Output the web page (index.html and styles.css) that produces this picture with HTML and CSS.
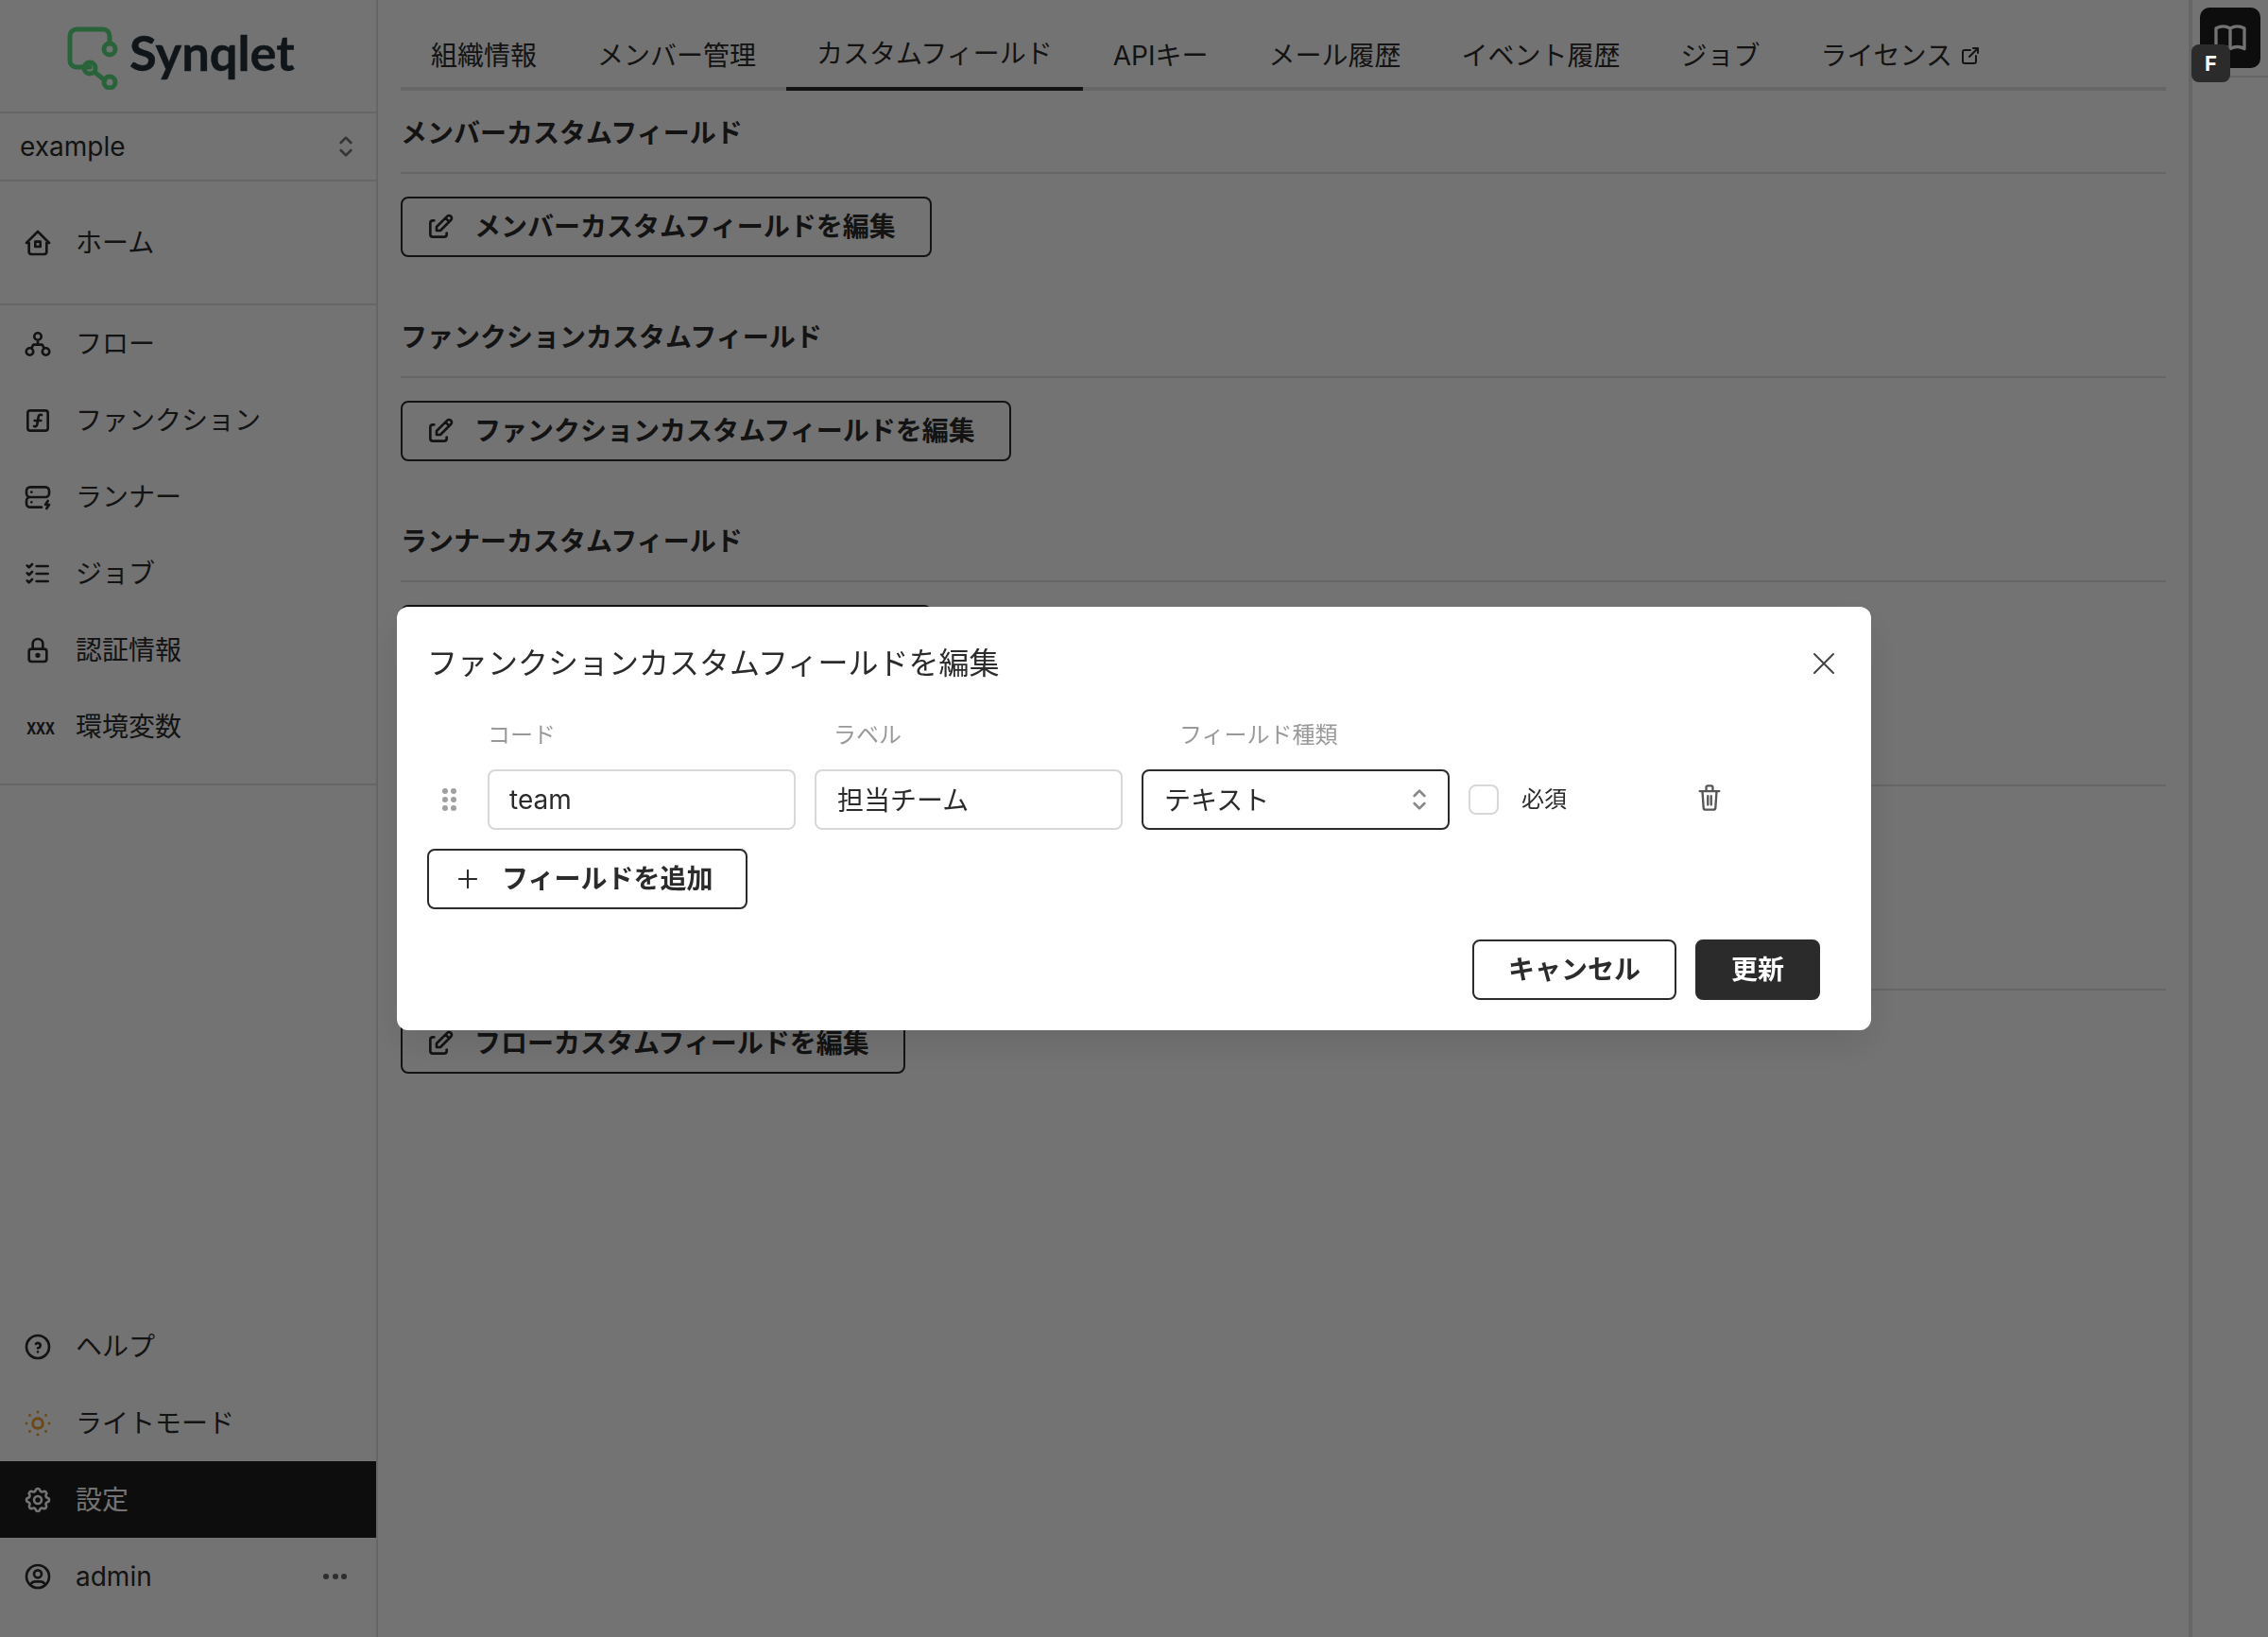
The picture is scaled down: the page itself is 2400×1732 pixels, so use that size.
FILE: index.html
```html
<!DOCTYPE html>
<html lang="ja">
<head>
<meta charset="utf-8">
<title>Synqlet</title>
<link rel="stylesheet" href="styles.css">
</head>
<body>
<svg class="sprite" width="0" height="0" aria-hidden="true">
  <symbol id="i-edit" viewBox="0 0 24 24"><path d="M7 7h-1a2 2 0 0 0 -2 2v9a2 2 0 0 0 2 2h9a2 2 0 0 0 2 -2v-1M20.385 6.585a2.1 2.1 0 0 0 -2.97 -2.97l-8.415 8.385v3h3l8.385 -8.415zM16 5l3 3"/></symbol>
  <symbol id="i-sel" viewBox="0 0 24 24"><path d="M8 9l4 -4l4 4M16 15l-4 4l-4 -4"/></symbol>
</svg>
<div class="app">
  <aside class="sidebar">
    <div class="brand">
      <svg class="logo" viewBox="0 0 54 67"><path d="M45 18V10a7 7 0 0 0-7-7H10a7 7 0 0 0-7 7v26a7 7 0 0 0 7 7h14M30 49l10 8"/><circle cx="45" cy="24" r="6"/><circle cx="24" cy="44" r="6"/><circle cx="45" cy="59" r="6"/></svg>
      <span class="wordmark">Synqlet</span>
    </div>
    <div class="org"><span>example</span><svg class="ic-sel"><use href="#i-sel"/></svg></div>
    <nav class="nav nav-home">
      <a class="item"><svg class="ic" viewBox="0 0 24 24"><path d="M5 12H3l9-9 9 9h-2M5 12v7a2 2 0 0 0 2 2h10a2 2 0 0 0 2-2v-7M10 11h4v4h-4z"/></svg>ホーム</a>
    </nav>
    <nav class="nav nav-main">
      <a class="item"><svg class="ic" viewBox="0 0 24 24"><path d="M9.200 6a2.800 2.800 0 1 0 5.600 0a2.800 2.800 0 1 0-5.600 0M2.800 18a2.800 2.800 0 1 0 5.600 0a2.800 2.800 0 1 0-5.600 0M15.600 18a2.800 2.800 0 1 0 5.600 0a2.800 2.800 0 1 0-5.600 0M7 15.200l1.500-2.700h7l1.500 2.700M12 8.800v3.700"/></svg>フロー</a>
      <a class="item"><svg class="ic" viewBox="0 0 24 24"><path d="M4 6a2 2 0 0 1 2-2h12a2 2 0 0 1 2 2v12a2 2 0 0 1-2 2H6a2 2 0 0 1-2-2zM9 16.500c1.500.5 2.200-.2 2.500-1.500l1-6c.3-1.300 1-2 2.500-1.500M9.500 12h5"/></svg>ファンクション</a>
      <a class="item"><svg class="ic" viewBox="0 0 24 24"><path d="M3 7a3 3 0 0 1 3-3h12a3 3 0 0 1 3 3v2a3 3 0 0 1-3 3H6a3 3 0 0 1-3-3zM15 20H6a3 3 0 0 1-3-3v-2a3 3 0 0 1 3-3h12M7 8v.01M7 16v.01M20 15l-2 3h3l-2 3"/></svg>ランナー</a>
      <a class="item"><svg class="ic" viewBox="0 0 24 24"><path d="M3.500 5.500l1.500 1.500l2.500-2.500M3.500 11.500l1.500 1.500l2.500-2.500M3.500 17.500l1.500 1.500l2.500-2.500M11 6h9M11 12h9M11 18h9"/></svg>ジョブ</a>
      <a class="item"><svg class="ic" viewBox="0 0 24 24"><path d="M5 13a2 2 0 0 1 2-2h10a2 2 0 0 1 2 2v6a2 2 0 0 1-2 2H7a2 2 0 0 1-2-2zM11 16a1 1 0 1 0 2 0a1 1 0 0 0-2 0M8 11V7a4 4 0 1 1 8 0v4"/></svg>認証情報</a>
      <a class="item"><span class="ic-xxx">xxx</span>環境変数</a>
    </nav>
    <nav class="nav nav-foot">
      <a class="item"><svg class="ic" viewBox="0 0 24 24"><path d="M3 12a9 9 0 1 0 18 0a9 9 0 0 0-18 0M12 16v.01M12 13a2 2 0 0 0 .914-3.782a1.980 1.980 0 0 0-2.414.483"/></svg>ヘルプ</a>
      <a class="item"><svg class="ic ic-sun" viewBox="0 0 24 24"><path d="M8 12a4 4 0 1 0 8 0a4 4 0 1 0-8 0M3 12h.01M12 3v.01M21 12h.01M12 21v.01M5.600 5.600v.01M18.400 5.600v.01M5.600 18.400v.01M18.400 18.400v.01"/></svg>ライトモード</a>
      <a class="item active"><svg class="ic" viewBox="0 0 24 24"><path d="M10.325 4.317c.426-1.756 2.924-1.756 3.350 0a1.724 1.724 0 0 0 2.573 1.066c1.543-.94 3.310.826 2.370 2.370a1.724 1.724 0 0 0 1.065 2.572c1.756.426 1.756 2.924 0 3.350a1.724 1.724 0 0 0-1.066 2.573c.94 1.543-.826 3.310-2.370 2.370a1.724 1.724 0 0 0-2.572 1.065c-.426 1.756-2.924 1.756-3.350 0a1.724 1.724 0 0 0-2.573-1.066c-1.543.94-3.310-.826-2.370-2.370a1.724 1.724 0 0 0-1.065-2.572c-1.756-.426-1.756-2.924 0-3.350a1.724 1.724 0 0 0 1.066-2.573c-.94-1.543.826-3.310 2.370-2.370c1 .608 2.296.07 2.572-1.065zM9 12a3 3 0 1 0 6 0a3 3 0 0 0-6 0"/></svg>設定</a>
      <a class="item"><svg class="ic" viewBox="0 0 24 24"><path d="M3 12a9 9 0 1 0 18 0a9 9 0 0 0-18 0M9 10a3 3 0 1 0 6 0a3 3 0 0 0-6 0M6.168 18.849a4 4 0 0 1 3.832-2.849h4a4 4 0 0 1 3.834 2.855"/></svg>admin<span class="more"><i></i><i></i><i></i></span></a>
    </nav>
  </aside>

  <main class="main">
    <div class="tabs">
      <a class="tab">組織情報</a>
      <a class="tab">メンバー管理</a>
      <a class="tab current">カスタムフィールド</a>
      <a class="tab">APIキー</a>
      <a class="tab">メール履歴</a>
      <a class="tab">イベント履歴</a>
      <a class="tab">ジョブ</a>
      <a class="tab">ライセンス<svg class="ic-ext" viewBox="0 0 24 24"><path d="M12 6H6a2 2 0 0 0-2 2v10a2 2 0 0 0 2 2h10a2 2 0 0 0 2-2v-6M11 13l9-9M15 4h5v5"/></svg></a>
    </div>
    <section class="block">
      <h2 class="block-title">メンバーカスタムフィールド</h2>
      <button class="btn btn-edit"><svg class="ic-edit"><use href="#i-edit"/></svg>メンバーカスタムフィールドを編集</button>
    </section>
    <section class="block">
      <h2 class="block-title">ファンクションカスタムフィールド</h2>
      <button class="btn btn-edit"><svg class="ic-edit"><use href="#i-edit"/></svg>ファンクションカスタムフィールドを編集</button>
    </section>
    <section class="block">
      <h2 class="block-title">ランナーカスタムフィールド</h2>
      <button class="btn btn-edit"><svg class="ic-edit"><use href="#i-edit"/></svg>ランナーカスタムフィールドを編集</button>
    </section>
    <section class="block">
      <h2 class="block-title">ジョブカスタムフィールド</h2>
      <button class="btn btn-edit"><svg class="ic-edit"><use href="#i-edit"/></svg>ジョブカスタムフィールドを編集</button>
    </section>
    <section class="block">
      <h2 class="block-title">フローカスタムフィールド</h2>
      <button class="btn btn-edit"><svg class="ic-edit"><use href="#i-edit"/></svg>フローカスタムフィールドを編集</button>
    </section>
  </main>

  <aside class="rail">
    <div class="rail-head">
      <button class="book"><svg viewBox="0 0 24 24"><path d="M3 19a9 9 0 0 1 9 0a9 9 0 0 1 9 0M3 6a9 9 0 0 1 9 0a9 9 0 0 1 9 0M3 6v13M12 6v13M21 6v13"/></svg></button>
    </div>
  </aside>
</div>

<div class="overlay">
  <div class="modal">
    <div class="modal-head">
      <h3 class="modal-title">ファンクションカスタムフィールドを編集</h3>
      <svg class="ic-close" viewBox="0 0 24 24"><path d="M22 2L2 22M2 2l20 20"/></svg>
    </div>
    <div class="col-labels">
      <span class="col-label">コード</span>
      <span class="col-label">ラベル</span>
      <span class="col-label">フィールド種類</span>
    </div>
    <div class="field-row">
      <span class="drag"><i></i><i></i><i></i><i></i><i></i><i></i></span>
      <div class="input">team</div>
      <div class="input input-ja">担当チーム</div>
      <div class="input input-ja select">テキスト<svg class="ic-sel-sm"><use href="#i-sel"/></svg></div>
      <span class="check"></span>
      <span class="check-label">必須</span>
      <svg class="ic-trash" viewBox="0 0 24 26"><path d="M3 7h18M5.500 7l1 15a2 2 0 0 0 2 2h7a2 2 0 0 0 2-2l1-15M9 7V3.500a1.500 1.500 0 0 1 1.500-1.500h3a1.500 1.500 0 0 1 1.500 1.500V7M10.500 11.500v8M13.500 11.500v8"/></svg>
    </div>
    <button class="btn btn-add"><svg class="ic-plus" viewBox="0 0 24 24"><path d="M12 2v20M2 12h20"/></svg>フィールドを追加</button>
    <div class="modal-foot">
      <button class="btn btn-cancel">キャンセル</button>
      <button class="btn btn-primary">更新</button>
    </div>
  </div>
  <span class="kbd">F</span>
</div>
</body>
</html>
```
FILE: styles.css
```css
* { box-sizing: border-box; }
html, body { margin: 0; height: 100%; overflow: hidden; }
body {
  font-family: Inter, "Noto Sans CJK JP", sans-serif;
  font-size: 28px;
  color: #2b2b2b;
  background: #fff;
}
.sprite { position: absolute; }
svg { fill: none; stroke: currentColor; stroke-linecap: round; stroke-linejoin: round; stroke-width: 2; }
.app { display: flex; height: 1732px; }

/* sidebar */
.sidebar {
  width: 400px;
  flex: none;
  display: flex;
  flex-direction: column;
  border-right: 2px solid #e2e2e2;
}
.brand {
  height: 120px;
  flex: none;
  display: flex;
  align-items: center;
  padding-left: 71px;
  gap: 12px;
  border-bottom: 2px solid #e2e2e2;
}
.logo { width: 54px; height: 67px; margin-top: 4px; color: #5bdc82; stroke-width: 5; }
.wordmark { font-family: Lato, sans-serif; font-weight: 700; font-size: 52.500px; line-height: 1; color: #243039; margin-bottom: 8px; -webkit-text-stroke: .4px #243039; }
.org {
  height: 72px;
  flex: none;
  display: flex;
  align-items: center;
  justify-content: space-between;
  padding: 0 21px;
  border-bottom: 2px solid #e2e2e2;
}
.ic-sel { width: 32px; height: 32px; margin-right: -5px; color: #777; }
.nav { display: flex; flex-direction: column; }
.nav-home { padding: 24px 0; border-bottom: 2px solid #e2e2e2; }
.nav-main { padding-bottom: 20px; border-bottom: 2px solid #e2e2e2; }
.nav-foot { margin-top: auto; padding-bottom: 24px; }
.item {
  height: 81px;
  display: flex;
  align-items: center;
  gap: 24px;
  padding: 0 31px 0 24px;
  line-height: 1;
}
.item.active { background: #1d1d1d; color: #fff; }
.ic { width: 32px; height: 32px; flex: none; stroke-width: 2; }
.ic-sun { color: #f2a02a; stroke-width: 2.200; }
.ic-xxx {
  width: 32px;
  flex: none;
  text-align: center;
  font-family: "Liberation Sans", sans-serif;
  font-weight: 700;
  font-size: 24px;
  transform: scaleX(.74);
}
.more { margin-left: auto; display: flex; gap: 3.500px; }
.more i { width: 6px; height: 6px; border-radius: 50%; background: #666; }

/* main */
.main { flex: 1; min-width: 0; padding: 0 24px; }
.tabs { height: 96px; display: flex; border-bottom: 4px solid #e2e2e2; }
.tab {
  height: 96px;
  padding: 21px 32px 0;
  display: flex;
  align-items: center;
  line-height: 1;
  white-space: nowrap;
}
.tab.current { border-bottom: 4px solid #2b2b2b; }
.ic-ext { width: 24px; height: 24px; margin-left: 7px; }
.block { height: 216px; }
.block-title {
  margin: 0 0 24px;
  height: 88px;
  font-size: 28px;
  font-weight: 700;
  line-height: 90px;
  border-bottom: 2px solid #e2e2e2;
}
.btn {
  height: 64px;
  display: inline-flex;
  align-items: center;
  font: inherit;
  font-weight: 700;
  color: #2b2b2b;
  background: #fff;
  border: 2px solid #2b2b2b;
  border-radius: 8px;
  padding: 0 36px;
  line-height: 1;
  white-space: nowrap;
}
.btn-edit { background: transparent; padding: 0 36px 0 24px; }
.ic-edit { width: 32px; height: 32px; margin-right: 20px; flex: none; }

/* rail */
.rail { width: 84px; flex: none; border-left: 4px solid #e2e2e2; }
.rail-head { height: 82px; padding: 8px 8px 0; border-bottom: 2px solid #e2e2e2; }
.book {
  width: 64px;
  height: 64px;
  padding: 0;
  display: flex;
  align-items: center;
  justify-content: center;
  background: #1d1d1d;
  border: 0;
  border-radius: 10px;
  color: #fff;
}
.book svg { width: 40px; height: 40px; }

/* overlay and dialog */
.overlay {
  position: fixed;
  inset: 0;
  display: flex;
  align-items: center;
  justify-content: center;
  background: rgba(0, 0, 0, .55);
}
.modal {
  width: 1560px;
  height: 448px;
  padding: 0 32px;
  background: #fff;
  border-radius: 12px;
  box-shadow: 0 16px 40px rgba(0, 0, 0, .1);
}
.modal-head {
  height: 112px;
  display: flex;
  align-items: center;
  justify-content: space-between;
  padding-top: 8px;
}
.modal-title { margin: 0; font-size: 32px; font-weight: 400; line-height: 1; }
.ic-close { width: 24px; height: 24px; margin-right: 6px; color: #444; }
.col-labels { display: flex; height: 46px; padding: 2px 0 0 64px; align-items: center; }
.col-label { width: 366px; font-size: 24px; line-height: 1; color: #999; }
.field-row { display: flex; align-items: center; gap: 20px; height: 64px; margin-top: 14px; }
.drag {
  width: 44px;
  flex: none;
  display: grid;
  grid-template-columns: 6px 6px;
  gap: 3px;
  justify-content: center;
  padding-left: 3px;
}
.drag i { width: 6px; height: 6px; border-radius: 50%; background: #a0a0a0; }
.input {
  width: 326px;
  height: 64px;
  flex: none;
  display: flex;
  align-items: center;
  padding: 0 21px;
  border: 2px solid #d8d8d8;
  border-radius: 8px;
  line-height: 1;
}
.input-ja { padding: 2px 22px 0; }
.select { border-color: #2b2b2b; justify-content: space-between; padding: 2px 14px 0 22px; }
.ic-sel-sm { width: 32px; height: 32px; margin-top: -2px; color: #888; }
.check { width: 32px; height: 32px; flex: none; border: 2px solid #d8d8d8; border-radius: 8px; }
.check-label { width: 149px; margin-left: 4px; font-size: 24px; line-height: 1; }
.ic-trash { width: 28px; height: 30px; margin-left: 16px; margin-top: -4px; color: #555; }
.btn-add { margin-top: 20px; padding: 0 35px 0 30px; }
.ic-plus { width: 22px; height: 22px; margin-right: 25px; flex: none; stroke-width: 2.200; }
.modal-foot { display: flex; justify-content: flex-end; gap: 20px; margin-top: 32px; padding-right: 22px; }
.btn-primary { background: #2b2b2b; color: #fff; }
.kbd {
  position: absolute;
  left: 2319px;
  top: 47px;
  width: 41px;
  height: 40px;
  display: flex;
  align-items: center;
  justify-content: center;
  background: #2b2b2b;
  border-radius: 8px;
  color: #fff;
  font-size: 22px;
  font-weight: 700;
  line-height: 1;
}
```
